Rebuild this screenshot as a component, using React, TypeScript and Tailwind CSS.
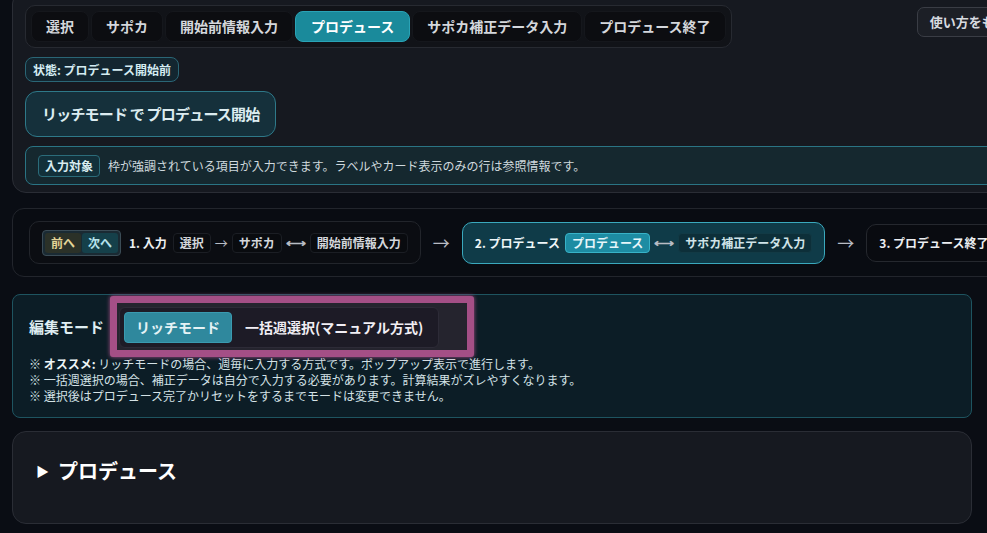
const font = { fontFamily: '"Noto Sans CJK JP", "Noto Sans", sans-serif' };

const topTabs = [
  { label: "選択", active: false },
  { label: "サポカ", active: false },
  { label: "開始前情報入力", active: false },
  { label: "プロデュース", active: true },
  { label: "サポカ補正データ入力", active: false },
  { label: "プロデュース終了", active: false },
];

function Chip({ children, tone = "plain" }: { children: React.ReactNode; tone?: "plain" | "active" | "teal" }) {
  const cls =
    tone === "active"
      ? "border-[#38b3c8] bg-[#1d8ca3] text-[#e6f6fa]"
      : tone === "teal"
        ? "border-[#123a45] bg-[#0d2f39] text-[#cfe3e8]"
        : "border-[#1b1e24] bg-[#090b0f] text-[#d3d6db]";
  return (
    <span className={`flex h-[20px] items-center rounded-[4px] border px-[6px] text-[12px] font-semibold ${cls}`}>
      {children}
    </span>
  );
}

function Arrow({ both = false }: { both?: boolean }) {
  return both ? (
    <span className="text-[14px] font-bold text-[#b8bcc4]">⟷</span>
  ) : (
    <span className="text-[13px] text-[#b8bcc4]">→</span>
  );
}

export default function App() {
  return (
    <div className="h-[533px] w-[987px] overflow-hidden bg-[#0a0d14] text-[#d6d9de]" style={font}>
      {/* top panel */}
      <section className="ml-[12px] mt-[-10px] flex w-[1150px] flex-col items-start gap-[9px] rounded-[14px] border border-[#2a2d35] bg-[#161920] px-[12px] pb-[7px] pt-[14px]">
        <div className="flex items-start gap-[185px]">
          <div className="flex gap-[2px] rounded-[10px] border border-[#272a31] bg-[#111318] p-[5px]">
            {topTabs.map((t) => (
              <span
                key={t.label}
                className={`flex h-[31px] items-center rounded-[8px] border px-[14px] text-[14px] font-semibold ${
                  t.active
                    ? "border-[#2aa3b6] bg-[#1a8a9b] px-[15px] text-white"
                    : "border-[#15171c] bg-[#0c0d11] text-[#d4d7dc]"
                }`}
              >
                {t.label}
              </span>
            ))}
          </div>
          <button className="mt-[2px] flex h-[30px] items-center rounded-[7px] border border-[#3a3d45] bg-[#1c1f26] px-[12px] text-[13px] font-semibold text-[#d8dbe0]">
            使い方をもっと見る
          </button>
        </div>

        <span className="flex h-[25px] items-center rounded-[8px] border border-[#2a6676] bg-[#132630] px-[7px] text-[12px] font-bold text-[#d4ecf2]">
          状態: プロデュース開始前
        </span>

        <button className="flex h-[46px] items-center rounded-[12px] border border-[#2e7989] bg-[#15303b] px-[16px] text-[15px] font-bold tracking-[-0.8px] text-[#dcecf0]">
          リッチモード で プロデュース開始
        </button>

        <div className="flex h-[39px] w-[1120px] items-center gap-[8px] rounded-[8px] border border-[#2a7484] bg-[#15282f] px-[12px]">
          <span className="flex h-[22px] items-center rounded-[4px] border border-[#2b6c7a] bg-[#12303a] px-[6px] text-[12px] font-bold text-[#d8ecf0]">
            入力対象
          </span>
          <span className="text-[12px] text-[#cfd9dd]">
            枠が強調されている項目が入力できます。ラベルやカード表示のみの行は参照情報です。
          </span>
        </div>
      </section>

      {/* step panel */}
      <section className="ml-[12px] mt-[15px] flex w-[1150px] items-center gap-[12px] rounded-[12px] border border-[#22252c] bg-[#090c12] px-[16px] py-[12px]">
        <div className="flex h-[43px] items-center gap-[4px] rounded-[10px] border border-[#22252b] bg-[#0b0d12] px-[12px]">
          <div className="mr-[4px] flex h-[26px] items-center gap-[1px] rounded-[4px] border border-[#3b4c56] bg-[#1a2a33] px-[2px]">
            <span className="flex h-[20px] items-center rounded-[3px] bg-[#2b3128] px-[6px] text-[12px] font-bold text-[#e3d497]">前へ</span>
            <span className="flex h-[20px] items-center rounded-[3px] bg-[#15404a] px-[6px] text-[12px] font-bold text-[#b6e2ec]">次へ</span>
          </div>
          <span className="mr-[2px] text-[12px] font-bold text-[#eceef1]">1. 入力</span>
          <Chip>選択</Chip>
          <Arrow />
          <Chip>サポカ</Chip>
          <Arrow both />
          <Chip>開始前情報入力</Chip>
        </div>
        <span className="text-[17px] text-[#b8bcc4]">→</span>
        <div className="flex h-[42px] items-center gap-[4px] rounded-[10px] border border-[#3aa9bd] bg-[#0f3b48] px-[12px]">
          <span className="mr-[1px] text-[12px] font-bold text-[#eef6f8]">2. プロデュース</span>
          <Chip tone="active">プロデュース</Chip>
          <Arrow both />
          <Chip tone="teal">サポカ補正データ入力</Chip>
        </div>
        <span className="text-[17px] text-[#b8bcc4]">→</span>
        <div className="flex h-[38px] items-center rounded-[10px] border border-[#25282e] bg-[#090b10] px-[12px]">
          <span className="text-[12px] font-bold text-[#eceef1]">3. プロデュース終了</span>
        </div>
      </section>

      {/* edit mode */}
      <section className="ml-[12px] mt-[17px] w-[960px] rounded-[8px] border border-[#1e5460] bg-[#0c1d26] px-[16px] pb-[13px] pt-[12px]">
        <div className="flex items-center gap-[15px]">
          <span className="text-[15px] font-bold text-[#dfeef2]">編集モード</span>
          <div className="relative">
            <div className="absolute -bottom-[9px] -left-[9px] -right-[35px] -top-[11px] rounded-[3px] border-[7px] border-[#a44f86] bg-[#25242e] shadow-[0_0_4px_#a44f86]" />
            <div className="relative flex h-[41px] items-center gap-[2px] rounded-[6px] border border-[#2d2b37] bg-[#1d1b26] p-[4px]">
              <span className="flex h-[31px] items-center rounded-[4px] border border-[#3a9ab0] bg-[#2f889d] px-[11px] text-[14px] font-bold text-[#e4f2f5]">
                リッチモード
              </span>
              <span className="flex h-[31px] items-center px-[11px] text-[14px] font-bold text-[#f1eef4]">
                一括週選択(マニュアル方式)
              </span>
            </div>
          </div>
        </div>
        <div className="mt-[8px] text-[12px] leading-[16px] text-[#d4e2e6]">
          <p>
            ※ <b className="text-[#eef5f7]">オススメ:</b> リッチモードの場合、週毎に入力する方式です。ポップアップ表示で進行します。
          </p>
          <p>※ 一括週選択の場合、補正データは自分で入力する必要があります。計算結果がズレやすくなります。</p>
          <p>※ 選択後はプロデュース完了かリセットをするまでモードは変更できません。</p>
        </div>
      </section>

      {/* produce collapsible */}
      <section className="ml-[12px] mt-[13px] h-[93px] w-[960px] rounded-[14px] border border-[#2a2d35] bg-[#161920] px-[23px] pt-[24px]">
        <div className="flex items-center gap-[9px] text-[20px] font-bold text-white">
          <span className="text-[13px]">▶</span>
          <span>プロデュース</span>
        </div>
      </section>
    </div>
  );
}
